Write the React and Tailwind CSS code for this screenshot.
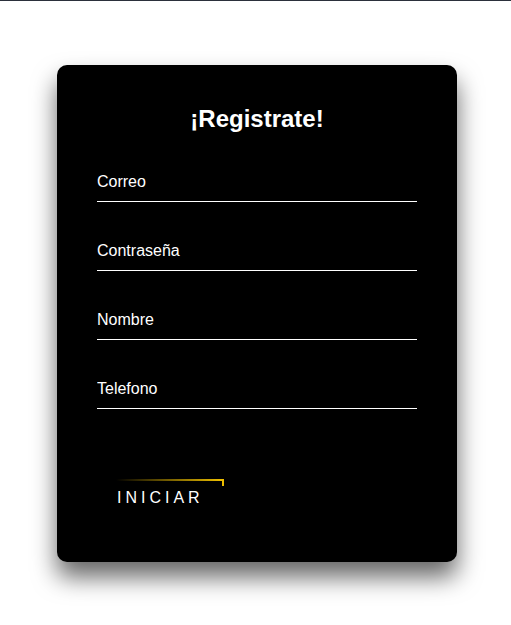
import React from 'react';

const fields = ['Correo', 'Contraseña', 'Nombre', 'Telefono'];

const App = () => {
  return (
    <div className="min-h-[625px] bg-white border-t border-[#2b303b] font-['Liberation_Sans',Arial,sans-serif]">
      <div className="flex justify-center pl-[3px] pt-[64px]">
        <div className="w-[400px] px-[40px] pt-[40px] pb-[38px] bg-black rounded-[10px] shadow-[0_15px_25px_rgba(0,0,0,0.6)]">
          <h2 className="m-0 mb-[30px] text-center text-white text-[24px] font-bold leading-[28px]">
            ¡Registrate!
          </h2>
          <form>
            {fields.map((field) => (
              <div key={field}>
                <input
                  type={field === 'Contraseña' ? 'password' : 'text'}
                  placeholder={field}
                  className="w-full py-[10px] mb-[30px] text-[16px] leading-[18px] text-white bg-transparent border-0 border-b border-white outline-none placeholder:text-white"
                />
              </div>
            ))}
            <a
              href="#"
              className="relative inline-block mt-[40px] px-5 py-[10px] text-white text-[16px] leading-[18px] uppercase tracking-[4px] overflow-hidden"
            >
              <span className="absolute top-0 left-0 w-full h-[2px] bg-linear-to-r from-transparent via-transparent via-[15%] to-[#f2c200]"></span>
              <span className="absolute top-0 right-0 w-[2px] h-[7px] bg-linear-to-b from-[#f2c200] to-[#e8b800]"></span>
              Iniciar
            </a>
          </form>
        </div>
      </div>
    </div>
  );
};

export default App;
